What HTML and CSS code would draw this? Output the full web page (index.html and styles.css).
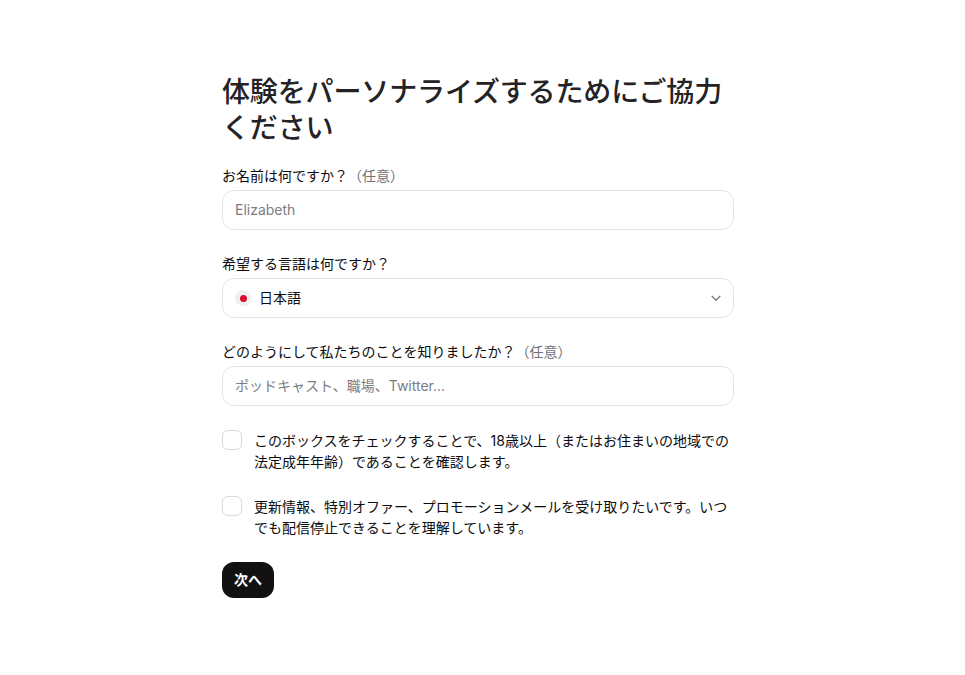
FILE: index.html
```html
<!DOCTYPE html>
<html lang="ja">
<head>
	<meta charset="utf-8">
	<meta name="viewport" content="width=device-width, initial-scale=1">
	<title>体験をパーソナライズ</title>
	<link rel="stylesheet" href="styles.css">
</head>
<body>
	<main class="page">
		<form class="survey">
			<h1 class="title">体験をパーソナライズするためにご協力ください</h1>

			<div class="field">
				<label class="label" for="name">お名前は何ですか？<span class="optional">（任意）</span></label>
				<input class="input" id="name" type="text" placeholder="Elizabeth">
			</div>

			<div class="field">
				<div class="label">希望する言語は何ですか？</div>
				<div class="select">
					<span class="flag"><span class="flag-dot"></span></span>
					<span class="select-text">日本語</span>
					<svg class="chevron" width="12" height="12" viewBox="0 0 12 12" fill="none">
						<path d="M2 4.250L6 8.250L10 4.250" stroke="#77777d" stroke-width="1.2" stroke-linecap="round" stroke-linejoin="round"/>
					</svg>
				</div>
			</div>

			<div class="field">
				<label class="label" for="source">どのようにして私たちのことを知りましたか？<span class="optional">（任意）</span></label>
				<input class="input" id="source" type="text" placeholder="ポッドキャスト、職場、Twitter...">
			</div>

			<div class="check-row">
				<span class="checkbox"></span>
				<p class="check-text">このボックスをチェックすることで、18歳以上（またはお住まいの地域での法定成年年齢）であることを確認します。</p>
			</div>

			<div class="check-row">
				<span class="checkbox"></span>
				<p class="check-text">更新情報、特別オファー、プロモーションメールを受け取りたいです。いつでも配信停止できることを理解しています。</p>
			</div>

			<button class="next" type="button">次へ</button>
		</form>
	</main>
</body>
</html>
```

FILE: styles.css
```css
* {
	box-sizing: border-box;
}

body {
	margin: 0;
	background: #fff;
	color: #0c0c0e;
	font-family: Inter, "Noto Sans CJK JP", sans-serif;
}

.page {
	display: flex;
	justify-content: center;
	padding-top: 74px;
}

.survey {
	width: 512px;
	margin-left: -9px;
	display: flex;
	flex-direction: column;
}

.title {
	margin: 0 0 20px;
	font-size: 28px;
	line-height: 36px;
	font-weight: 500;
	letter-spacing: -0.14px;
	color: #232326;
}

.field {
	margin-bottom: 24px;
}

.label {
	display: block;
	height: 20px;
	margin-bottom: 4px;
	font-size: 14px;
	line-height: 20px;
}

.optional {
	color: #71717a;
}

.input, .select {
	display: flex;
	align-items: center;
	width: 100%;
	height: 40px;
	padding: 0 12px;
	background: #fff;
	border: 1px solid #e4e4e7;
	border-radius: 12px;
	font-family: inherit;
	font-size: 14px;
	color: #0c0c0e;
	outline: none;
}

.input {
	padding-bottom: 2px;
}

.input::placeholder {
	color: #7c7c85;
	opacity: 1;
}

.flag {
	display: flex;
	align-items: center;
	justify-content: center;
	width: 16px;
	height: 16px;
	margin-right: 8px;
	border-radius: 50%;
	background: #f0f0f1;
}

.flag-dot {
	width: 7px;
	height: 7px;
	border-radius: 50%;
	background: #dc0a2d;
}

.select-text {
	flex: 1;
	padding-bottom: 2px;
}

.chevron {
	margin-right: -1px;
}

.check-row {
	display: flex;
	gap: 12px;
	margin-bottom: 24px;
}

.checkbox {
	flex: none;
	width: 20px;
	height: 20px;
	border: 1px solid #d9d9dd;
	border-radius: 6px;
	background: #fff;
}

.check-text {
	margin: 0;
	font-size: 14px;
	line-height: 21px;
}

.next {
	align-self: flex-start;
	height: 36px;
	padding: 0 12px 2px;
	border: 0;
	border-radius: 12px;
	background: #111111;
	color: #fff;
	font-family: inherit;
	font-size: 14px;
	font-weight: 600;
}
```
